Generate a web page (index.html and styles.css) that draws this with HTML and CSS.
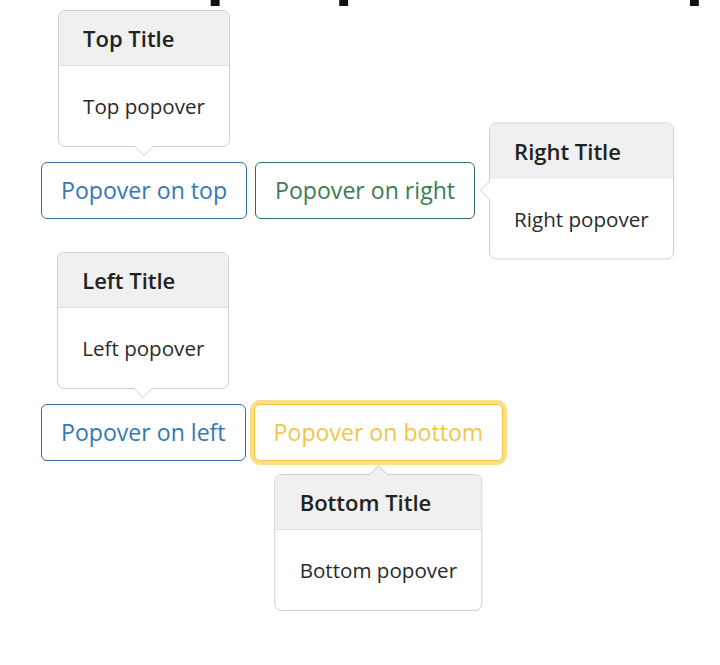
FILE: index.html
```html
<!DOCTYPE html>
<html lang="en">
<head>
<meta charset="UTF-8" />
<meta name="viewport" content="width=device-width, initial-scale=1" />
<title>Bootstrap Popover Example</title>
<link rel="stylesheet" href="styles.css">
</head>
<body>

<div class="page">
  <h1 class="page-title">Bootstrap Popover Example</h1>

  <div class="btn-row first">
    <span class="anchor">
      <button class="btn btn-primary">Popover on top</button>
      <div class="popover top">
        <div class="popover-header">Top Title</div>
        <div class="popover-body">Top popover</div>
      </div>
    </span>
    <span class="anchor">
      <button class="btn btn-success">Popover on right</button>
      <div class="popover right">
        <div class="popover-header">Right Title</div>
        <div class="popover-body">Right popover</div>
      </div>
    </span>
  </div>

  <div class="btn-row second">
    <span class="anchor">
      <button class="btn btn-primary">Popover on left</button>
      <div class="popover top">
        <div class="popover-header">Left Title</div>
        <div class="popover-body">Left popover</div>
      </div>
    </span>
    <span class="anchor">
      <button class="btn btn-warning focus">Popover on bottom</button>
      <div class="popover bottom">
        <div class="popover-header">Bottom Title</div>
        <div class="popover-body">Bottom popover</div>
      </div>
    </span>
  </div>
</div>

</body>
</html>
```

FILE: styles.css
```css
  body {
    margin: 0;
    background: #fff;
    color: #212529;
    font-family: "Open Sans", "Noto Sans", sans-serif;
  }

  .page {
    padding-left: 41px;
    min-height: 665px;
    box-sizing: border-box;
    overflow: hidden;
  }

  .page-title {
    font-size: 60px;
    line-height: 72px;
    font-weight: 700;
    margin: -68px 0 0 -95px;
    white-space: nowrap;
    color: #111;
  }

  .btn-row {
    display: flex;
    gap: 8px;
  }

  .btn-row.first {
    margin-top: 158px;
  }

  .btn-row.second {
    margin-top: 185px;
  }

  .anchor {
    position: relative;
    display: inline-block;
  }

  .btn {
    display: block;
    font-family: inherit;
    font-size: 23.1px;
    line-height: 35px;
    padding: 10px 19px;
    background: #fff;
    border: 1px solid;
    border-radius: 6px;
    cursor: pointer;
  }

  .btn-primary {
    color: #3478b6;
    border-color: #2f6ea8;
  }

  .btn-success {
    color: #3a7d55;
    border-color: #2f7349;
  }

  .btn-warning {
    color: #efc64c;
    border-color: #f1c441;
  }

  .btn-warning.focus {
    box-shadow: 0 0 0 4px #f9df86;
  }

/* popovers */
.popover {
  position: absolute;
  z-index: 2;
  width: max-content;
  background: #fff;
  border: 1px solid #cfcfcf;
  border-radius: 7px;
  font-size: 20.6px;
}

.popover-header {
  background: #f0f0f0;
  border-bottom: 1px solid #dedede;
  border-radius: 6px 6px 0 0;
  padding: 12px 24px;
  line-height: 30px;
  font-size: 22px;
  font-weight: 600;
  color: #222;
}

.popover-body {
  padding: 25px 24px;
  line-height: 30px;
  color: #2a2a2a;
}

.popover::before,
.popover::after {
  content: '';
  position: absolute;
  border: 10px solid transparent;
}

.popover.top {
  bottom: calc(100% + 15px);
  left: 50%;
  transform: translateX(-50%);
}

.popover.top::before {
  top: 100%;
  left: 50%;
  margin-left: -10px;
  border-top-color: #cfcfcf;
}

.popover.top::after {
  top: 100%;
  left: 50%;
  margin-left: -10px;
  margin-top: -1px;
  border-top-color: #fff;
}

.popover.right {
  left: calc(100% + 14px);
  top: 50%;
  transform: translateY(-50%);
}

.popover.right::before {
  right: 100%;
  top: 50%;
  margin-top: -10px;
  border-right-color: #cfcfcf;
}

.popover.right::after {
  right: 100%;
  top: 50%;
  margin-top: -10px;
  margin-right: -1px;
  border-right-color: #fff;
}

.popover.bottom {
  top: calc(100% + 13px);
  left: 50%;
  transform: translateX(-50%);
}

.popover.bottom::before {
  bottom: 100%;
  left: 50%;
  margin-left: -10px;
  border-bottom-color: #cfcfcf;
}

.popover.bottom::after {
  bottom: 100%;
  left: 50%;
  margin-left: -10px;
  margin-bottom: -1px;
  border-bottom-color: #f0f0f0;
}
```
